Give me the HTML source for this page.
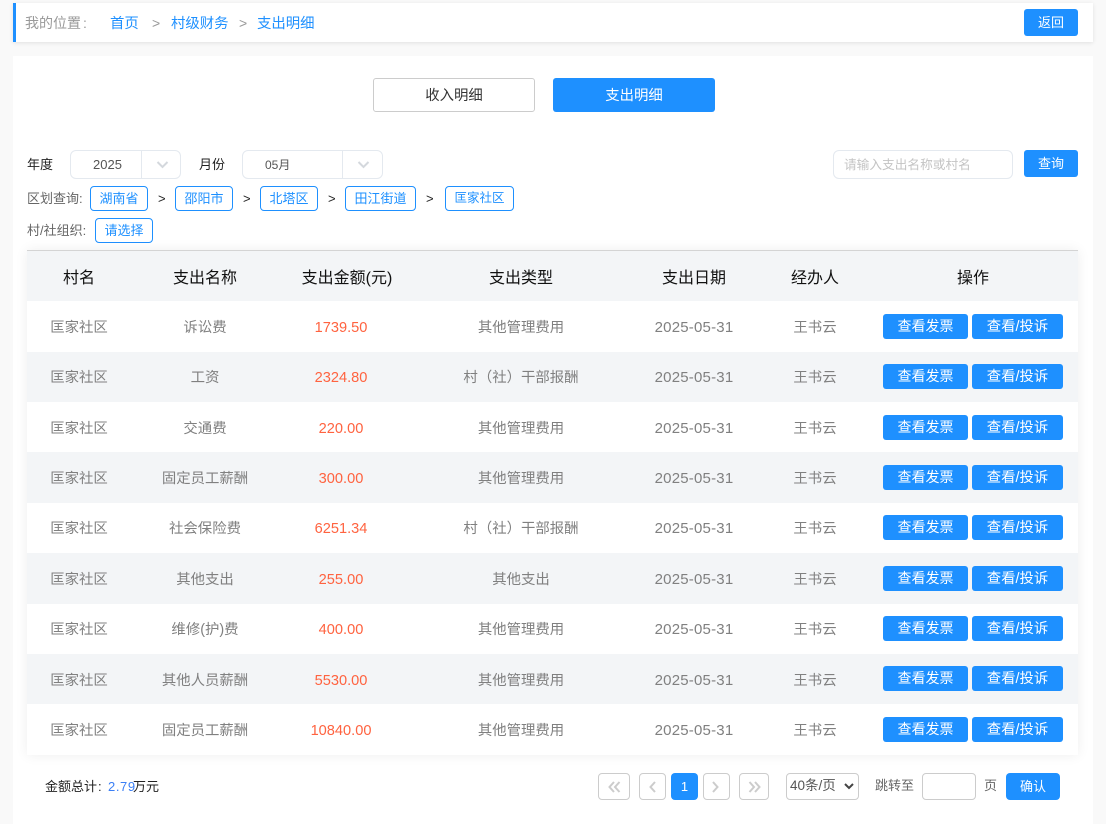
<!DOCTYPE html>
<html lang="zh">
<head>
<meta charset="utf-8">
<style>
*{box-sizing:border-box;margin:0;padding:0}
html,body{width:1106px;height:824px;overflow:hidden;background:#f9f9f9;font-family:"Liberation Sans","Noto Sans CJK SC",sans-serif;font-size:13px}
.a{position:absolute;white-space:nowrap}
.btn{position:absolute;background:#1e90ff;color:#fff;border-radius:3px;text-align:center;white-space:nowrap}
.tag{position:absolute;height:25px;line-height:23px;border:1px solid #1e90ff;border-radius:4px;color:#1e90ff;text-align:center;background:#fff;font-size:13px}
.box{position:absolute;border:1px solid #e4e9ef;border-radius:6px;background:#fff}
.pg{position:absolute;top:773px;height:27px;border:1px solid #ccc;border-radius:4px;background:#fff}
.row{position:absolute;left:27px;width:1051px;font-size:14.400px;color:#808080}
.row.g{background:#f3f5f7}
.row span{position:absolute;top:2px;line-height:50px;transform:translateX(-50%);white-space:nowrap}
.row.s span{top:1px}
.row .m{top:2px;color:#ff6340;font-size:14.600px}
.row.s .m{top:1px}
.row .d{top:2px;font-size:15px;letter-spacing:.2px;color:#808080}
.row.s .d{top:1px}
.row b{position:absolute;top:13px;height:25px;line-height:25px;background:#1e90ff;color:#fff;border-radius:3px;text-align:center;font-weight:normal;font-size:14px}
.row.s b,.row.t b{top:12px}
.row b.x{left:856px;width:85px}
.row b.y{left:945px;width:91px;font-size:14.400px;line-height:27px}
.h{position:absolute;top:253px;line-height:52px;font-size:16px;color:#111;transform:translateX(-50%);white-space:nowrap}
</style>
</head>
<body>
<div class="a" style="left:13px;top:3px;width:1080px;height:39px;background:#fff;border-left:3px solid #1e90ff;box-shadow:0 1px 4px rgba(0,0,0,.1)"></div>
<div class="a" style="left:25px;top:13px;font-size:14px;line-height:20px;color:#999">我的位置<span style="margin-left:2px">:</span></div>
<div class="a" style="left:110px;top:14px;font-size:14.400px;line-height:20px;color:#1e90ff">首页</div>
<div class="a" style="left:152px;top:13px;font-size:14px;line-height:20px;color:#999">&gt;</div>
<div class="a" style="left:171px;top:14px;font-size:14.400px;line-height:20px;color:#1e90ff">村级财务</div>
<div class="a" style="left:239px;top:13px;font-size:14px;line-height:20px;color:#999">&gt;</div>
<div class="a" style="left:257px;top:14px;font-size:14.400px;line-height:20px;color:#1e90ff">支出明细</div>
<div class="btn" style="left:1024px;top:9px;width:54px;height:27px;line-height:27px">返回</div>

<div class="a" style="left:13px;top:56px;width:1080px;height:768px;background:#fff"></div>

<div class="a" style="left:373px;top:78px;width:162px;height:34px;line-height:35px;border:1px solid #ccc;border-radius:3px;text-align:center;color:#333;background:#fff;font-size:14.400px">收入明细</div>
<div class="btn" style="left:553px;top:78px;width:162px;height:34px;line-height:37px;font-size:14.400px">支出明细</div>

<div class="a" style="left:27px;top:155px;line-height:20px;color:#222">年度</div>
<div class="box" style="left:70px;top:150px;width:111px;height:29px"></div>
<div class="a" style="left:141px;top:150px;width:1px;height:29px;background:#e4e9ef"></div>
<div class="a" style="left:93px;top:155px;line-height:20px;color:#555">2025</div>
<svg class="a" style="left:156px;top:161px" width="13" height="8"><path d="M1.500 1l5 5 5-5" fill="none" stroke="#d4d8dd" stroke-width="2"/></svg>
<div class="a" style="left:199px;top:155px;line-height:20px;color:#222">月份</div>
<div class="box" style="left:242px;top:150px;width:141px;height:29px"></div>
<div class="a" style="left:342px;top:150px;width:1px;height:29px;background:#e4e9ef"></div>
<div class="a" style="left:265px;top:155px;line-height:20px;color:#555;font-size:12px">05月</div>
<svg class="a" style="left:357px;top:161px" width="13" height="8"><path d="M1.500 1l5 5 5-5" fill="none" stroke="#d4d8dd" stroke-width="2"/></svg>

<div class="box" style="left:833px;top:150px;width:180px;height:29px"></div>
<div class="a" style="left:844px;top:155px;line-height:20px;color:#c4c4c4;font-size:12.700px">请输入支出名称或村名</div>
<div class="btn" style="left:1024px;top:150px;width:54px;height:27px;line-height:27px">查询</div>

<div class="a" style="left:27px;top:189px;line-height:20px;color:#666">区划查询:</div>
<div class="tag" style="left:90px;top:186px;width:58px">湖南省</div>
<div class="a" style="left:158px;top:189px;line-height:20px;color:#222">&gt;</div>
<div class="tag" style="left:175px;top:186px;width:58px">邵阳市</div>
<div class="a" style="left:243px;top:189px;line-height:20px;color:#222">&gt;</div>
<div class="tag" style="left:260px;top:186px;width:58px">北塔区</div>
<div class="a" style="left:328px;top:189px;line-height:20px;color:#222">&gt;</div>
<div class="tag" style="left:345px;top:186px;width:71px">田江街道</div>
<div class="a" style="left:426px;top:189px;line-height:20px;color:#222">&gt;</div>
<div class="tag" style="left:445px;top:186px;width:69px;font-size:12.500px">匡家社区</div>
<div class="a" style="left:27px;top:221px;line-height:20px;color:#666">村/社组织:</div>
<div class="tag" style="left:95px;top:218px;width:58px">请选择</div>

<div class="a" style="left:27px;top:250px;width:1051px;height:505px;background:#fff;box-shadow:0 0 12px rgba(0,0,0,.07)"></div>
<div class="a" style="left:27px;top:250px;width:1051px;height:51px;background:#f3f5f7;border-top:1px solid #d4d4d4"></div>
<div class="h" style="left:79px">村名</div>
<div class="h" style="left:205px">支出名称</div>
<div class="h" style="left:347px">支出金额(元)</div>
<div class="h" style="left:521px">支出类型</div>
<div class="h" style="left:694px">支出日期</div>
<div class="h" style="left:815px">经办人</div>
<div class="h" style="left:973px">操作</div>

<div class="row" style="top:301px;height:51px"><span style="left:52px">匡家社区</span><span style="left:178px">诉讼费</span><span class="m" style="left:314px">1739.50</span><span style="left:494px">其他管理费用</span><span class="d" style="left:667px">2025-05-31</span><span style="left:788px">王书云</span><b class="x">查看发票</b><b class="y">查看/投诉</b></div>
<div class="row g s" style="top:352px;height:50px"><span style="left:52px">匡家社区</span><span style="left:178px">工资</span><span class="m" style="left:314px">2324.80</span><span style="left:494px">村（社）干部报酬</span><span class="d" style="left:667px">2025-05-31</span><span style="left:788px">王书云</span><b class="x">查看发票</b><b class="y">查看/投诉</b></div>
<div class="row" style="top:402px;height:50px"><span style="left:52px">匡家社区</span><span style="left:178px">交通费</span><span class="m" style="left:314px">220.00</span><span style="left:494px">其他管理费用</span><span class="d" style="left:667px">2025-05-31</span><span style="left:788px">王书云</span><b class="x">查看发票</b><b class="y">查看/投诉</b></div>
<div class="row g" style="top:452px;height:51px"><span style="left:52px">匡家社区</span><span style="left:178px">固定员工薪酬</span><span class="m" style="left:314px">300.00</span><span style="left:494px">其他管理费用</span><span class="d" style="left:667px">2025-05-31</span><span style="left:788px">王书云</span><b class="x">查看发票</b><b class="y">查看/投诉</b></div>
<div class="row s" style="top:503px;height:50px"><span style="left:52px">匡家社区</span><span style="left:178px">社会保险费</span><span class="m" style="left:314px">6251.34</span><span style="left:494px">村（社）干部报酬</span><span class="d" style="left:667px">2025-05-31</span><span style="left:788px">王书云</span><b class="x">查看发票</b><b class="y">查看/投诉</b></div>
<div class="row g" style="top:553px;height:51px"><span style="left:52px">匡家社区</span><span style="left:178px">其他支出</span><span class="m" style="left:314px">255.00</span><span style="left:494px">其他支出</span><span class="d" style="left:667px">2025-05-31</span><span style="left:788px">王书云</span><b class="x">查看发票</b><b class="y">查看/投诉</b></div>
<div class="row s" style="top:604px;height:50px"><span style="left:52px">匡家社区</span><span style="left:178px">维修(护)费</span><span class="m" style="left:314px">400.00</span><span style="left:494px">其他管理费用</span><span class="d" style="left:667px">2025-05-31</span><span style="left:788px">王书云</span><b class="x">查看发票</b><b class="y">查看/投诉</b></div>
<div class="row g t" style="top:654px;height:50px"><span style="left:52px">匡家社区</span><span style="left:178px">其他人员薪酬</span><span class="m" style="left:314px">5530.00</span><span style="left:494px">其他管理费用</span><span class="d" style="left:667px">2025-05-31</span><span style="left:788px">王书云</span><b class="x">查看发票</b><b class="y">查看/投诉</b></div>
<div class="row" style="top:704px;height:51px"><span style="left:52px">匡家社区</span><span style="left:178px">固定员工薪酬</span><span class="m" style="left:314px">10840.00</span><span style="left:494px">其他管理费用</span><span class="d" style="left:667px">2025-05-31</span><span style="left:788px">王书云</span><b class="x">查看发票</b><b class="y">查看/投诉</b></div>

<div class="a" style="left:45px;top:777px;line-height:20px;font-size:13px;color:#222">金额总计<span style="margin-left:1px">:</span></div>
<div class="a" style="left:108px;top:777px;line-height:20px;font-size:13px;letter-spacing:.6px;color:#3b7ff5">2.79</div>
<div class="a" style="left:133px;top:777px;line-height:20px;font-size:13px;color:#222">万元</div>

<div class="pg" style="left:598px;width:32px"></div>
<svg class="a" style="left:608px;top:781px" width="13" height="12"><path d="M6 1L1.500 6 6 11M11.500 1L7 6l4.500 5" fill="none" stroke="#ccc" stroke-width="2"/></svg>
<div class="pg" style="left:639px;width:27px"></div>
<svg class="a" style="left:648px;top:781px" width="9" height="12"><path d="M7 1L2.500 6 7 11" fill="none" stroke="#ccc" stroke-width="2"/></svg>
<div class="btn" style="left:671px;top:773px;width:27px;height:27px;line-height:27px;border-radius:4px">1</div>
<div class="pg" style="left:703px;width:27px"></div>
<svg class="a" style="left:711px;top:781px" width="9" height="12"><path d="M2 1l4.500 5L2 11" fill="none" stroke="#ccc" stroke-width="2"/></svg>
<div class="pg" style="left:739px;width:30px"></div>
<svg class="a" style="left:748px;top:781px" width="13" height="12"><path d="M1.500 1L6 6l-4.500 5M7 1l4.500 5L7 11" fill="none" stroke="#ccc" stroke-width="2"/></svg>

<div class="pg" style="left:786px;width:73px"></div>
<div class="a" style="left:790px;top:776px;line-height:20px;color:#555;font-size:13.500px">40条/页</div>
<svg class="a" style="left:844px;top:783px" width="10" height="7"><path d="M1 1l4 4 4-4" fill="none" stroke="#444" stroke-width="2"/></svg>
<div class="a" style="left:875px;top:776px;line-height:20px;color:#666">跳转至</div>
<div class="pg" style="left:922px;width:54px"></div>
<div class="a" style="left:984px;top:776px;line-height:20px;color:#666">页</div>
<div class="btn" style="left:1006px;top:773px;width:54px;height:27px;line-height:27px;border-radius:4px">确认</div>
</body>
</html>
